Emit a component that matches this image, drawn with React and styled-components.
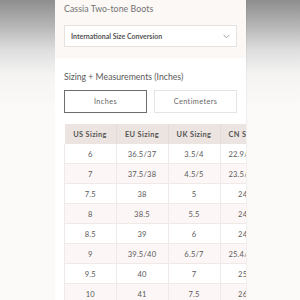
import React, { useState } from 'react';
import styled, { createGlobalStyle } from 'styled-components';

const GlobalStyle = createGlobalStyle`
  html, body {
    margin: 0;
    padding: 0;
    height: 300px;
    overflow: hidden;
    font-family: Lato, "Open Sans", sans-serif;
  }
`;

const Page = styled.div`
  width: 300px;
  height: 300px;
  overflow: hidden;
  background: linear-gradient(to bottom, #8e8e8e 0px, #b4b4b4 25px, #dedede 50px, #f5f4f3 75px, #fbfaf9 110px);
  display: flex;
  justify-content: flex-start;
`;

const Panel = styled.div`
  margin-left: 55px;
  width: 191px;
  height: 300px;
  background: #ffffff;
  display: flex;
  flex-direction: column;
  box-shadow: 1px 0 1px rgba(0, 0, 0, 0.04);
`;

const TopSection = styled.div`
  background: #fbf8f6;
  padding: 3px 9px 11px 9px;
`;

const ProductName = styled.div`
  font-size: 8.8px;
  color: #727272;
  line-height: 12px;
  margin-bottom: 10px;
  letter-spacing: 0.05px;
`;

const Dropdown = styled.div`
  height: 20px;
  border: 1px solid #e6e2df;
  background: #ffffff;
  display: flex;
  align-items: center;
  justify-content: space-between;
  padding: 0 6px;
  font-size: 7px;
  font-weight: 700;
  color: #555;
`;

const Body = styled.div`
  padding: 13px 0 0 9px;
  display: flex;
  flex-direction: column;
`;

const SectionTitle = styled.div`
  font-size: 8.7px;
  color: #5a5a5a;
  line-height: 12px;
  margin-bottom: 7px;
`;

const Tabs = styled.div`
  display: flex;
  gap: 7px;
  padding-right: 9px;
  margin-bottom: 11px;
`;

const Tab = styled.button`
  flex: 1;
  height: 23px;
  background: #fff;
  border: 1px solid ${p => (p.$active ? '#6e6e6e' : '#e6e3e1')};
  font-family: Lato, sans-serif;
  font-size: 7.3px;
  letter-spacing: 0.4px;
  color: #666;
  padding: 0;
  cursor: pointer;
`;

const TableWrap = styled.div`
  width: 182px;
  overflow: hidden;
`;

const Table = styled.table`
  border-collapse: collapse;
  table-layout: fixed;
  width: 204px;
`;

const Th = styled.th`
  width: 51px;
  height: 20px;
  background: #ece4e0;
  font-size: 7.4px;
  font-weight: 700;
  letter-spacing: 0.35px;
  color: #555;
  border-right: 1px solid #e2dbd8;
  padding: 0;
  white-space: nowrap;
  overflow: hidden;
`;

const Row = styled.tr`
  background: ${p => (p.$alt ? '#fcf7f6' : '#ffffff')};
`;

const Td = styled.td`
  height: 19px;
  text-align: center;
  font-size: 7.6px;
  letter-spacing: 0.2px;
  color: #5a5a5a;
  border-right: 1px solid #efe9e7;
  border-bottom: 1px solid #efe9e7;
  border-left: ${p => (p.$first ? '1px solid #efe9e7' : 'none')};
  padding: 0;
  white-space: nowrap;
  overflow: hidden;
`;

const Chevron = () => (
  <svg width="7" height="5" viewBox="0 0 7 5" fill="none">
    <path d="M0.5 0.8 L3.5 3.8 L6.5 0.8" stroke="#8a8a8a" strokeWidth="0.8" />
  </svg>
);

const rows = [
  ['6', '36.5/37', '3.5/4', '22.9/23.2'],
  ['7', '37.5/38', '4.5/5', '23.5/23.8'],
  ['7.5', '38', '5', '24.1'],
  ['8', '38.5', '5.5', '24.4'],
  ['8.5', '39', '6', '24.8'],
  ['9', '39.5/40', '6.5/7', '25.4/25.7'],
  ['9.5', '40', '7', '25.7'],
  ['10', '41', '7.5', '26.0'],
];

export default function App() {
  const [unit, setUnit] = useState('in');
  return (
    <>
      <GlobalStyle />
      <Page>
        <Panel>
          <TopSection>
            <ProductName>Cassia Two-tone Boots</ProductName>
            <Dropdown>
              <span>International Size Conversion</span>
              <Chevron />
            </Dropdown>
          </TopSection>
          <Body>
            <SectionTitle>Sizing + Measurements (Inches)</SectionTitle>
            <Tabs>
              <Tab $active={unit === 'in'} onClick={() => setUnit('in')}>Inches</Tab>
              <Tab $active={unit === 'cm'} onClick={() => setUnit('cm')}>Centimeters</Tab>
            </Tabs>
            <TableWrap>
              <Table>
                <thead>
                  <tr>
                    <Th>US Sizing</Th>
                    <Th>EU Sizing</Th>
                    <Th>UK Sizing</Th>
                    <Th>CN Sizing</Th>
                  </tr>
                </thead>
                <tbody>
                  {rows.map((r, i) => (
                    <Row key={r[0]} $alt={i % 2 === 1}>
                      {r.map((c, j) => (
                        <Td key={j} $first={j === 0}>{c}</Td>
                      ))}
                    </Row>
                  ))}
                </tbody>
              </Table>
            </TableWrap>
          </Body>
        </Panel>
      </Page>
    </>
  );
}
